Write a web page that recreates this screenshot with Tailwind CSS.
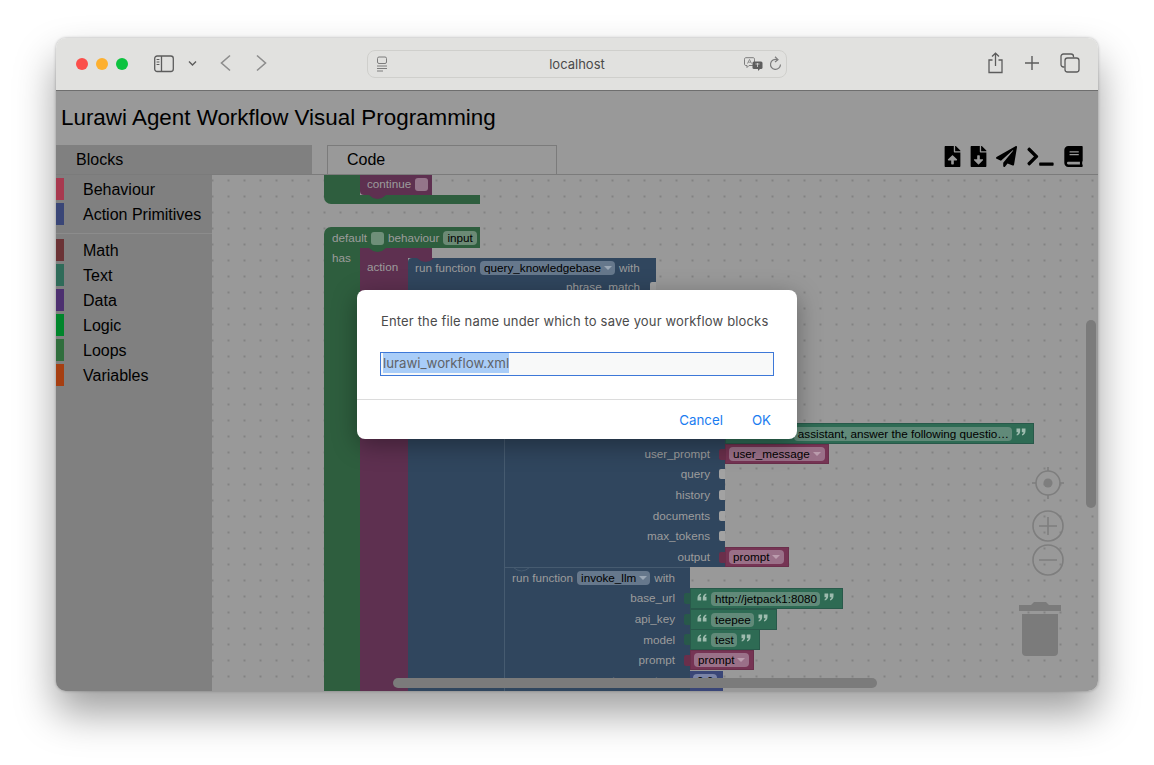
<!DOCTYPE html>
<html lang="en">
<head>
  <meta charset="UTF-8" />
  <title>Lurawi Agent Workflow Visual Programming</title>
  <script src="https://cdn.jsdelivr.net/npm/@tailwindcss/browser@4"></script>
</head>
<body class="bg-white h-[765px] w-[1154px] overflow-hidden pt-[38px] pl-[56px] font-['Liberation_Sans',Arial,sans-serif] text-black">
  <svg class="hidden">
    <symbol id="quote-open" viewBox="0 0 10 8"><path d="M0.5 7.5V5C0.5 2.5 2 0.8 4 0.5V2C3 2.3 2.6 3 2.6 3.8H4.2V7.5ZM5.8 7.5V5C5.8 2.5 7.3 0.8 9.3 0.5V2C8.3 2.3 7.9 3 7.9 3.8H9.5V7.5Z" fill="currentColor"/></symbol>
    <symbol id="quote-close" viewBox="0 0 10 8"><path d="M9.5 0.5V3C9.5 5.5 8 7.2 6 7.5V6C7 5.7 7.4 5 7.4 4.2H5.8V0.5ZM4.2 0.5V3C4.2 5.5 2.7 7.2 0.7 7.5V6C1.7 5.7 2.1 5 2.1 4.2H0.5V0.5Z" fill="currentColor"/></symbol>
    <symbol id="caret" viewBox="0 0 8 4"><path d="M0 0H8L4 4Z" fill="currentColor"/></symbol>
  </svg>

  <!-- Browser window -->
  <div class="relative w-[1042px] h-[653px] rounded-[10px] overflow-hidden flex flex-col shadow-[0_22px_40px_rgba(0,0,0,0.38),0_0_3px_rgba(0,0,0,0.3)]">
    <!-- Safari toolbar -->
    <header class="relative h-[53px] shrink-0 bg-[#e1e1df] border-b border-[#6e6e6e] text-[#5c5c5c]">
      <div class="absolute left-[20px] top-[20px] flex gap-[8px]">
        <span class="w-[12px] h-[12px] rounded-full bg-[#fb4f4b]"></span>
        <span class="w-[12px] h-[12px] rounded-full bg-[#fdb02f]"></span>
        <span class="w-[12px] h-[12px] rounded-full bg-[#0cc23f]"></span>
      </div>
      <svg class="absolute left-[98px] top-[17px]" width="20" height="18" viewBox="0 0 20 18" fill="none" stroke="currentColor" stroke-width="1.3"><rect x="0.7" y="1" width="18.6" height="15.5" rx="2.5"/><path d="M7.5 1V16.5"/><path d="M2.6 4.5H5.4M2.6 7H5.4M2.6 9.5H5.4" stroke-width="1"/></svg>
      <svg class="absolute left-[132px] top-[22px]" width="9" height="7" viewBox="0 0 9 7" fill="none" stroke="currentColor" stroke-width="1.4"><path d="M1 1.5L4.5 5L8 1.5"/></svg>
      <svg class="absolute left-[163px] top-[16px] text-[#8d8d8d]" width="13" height="18" viewBox="0 0 13 18" fill="none" stroke="currentColor" stroke-width="1.6"><path d="M11 1.5L2.5 9L11 16.5"/></svg>
      <svg class="absolute left-[199px] top-[16px] text-[#8d8d8d]" width="13" height="18" viewBox="0 0 13 18" fill="none" stroke="currentColor" stroke-width="1.6"><path d="M2 1.5L10.5 9L2 16.5"/></svg>

      <!-- Address bar -->
      <div class="absolute left-[311px] top-[12px] w-[420px] h-[28px] rounded-[8px] border border-[#cfcfcc] flex items-center justify-center pt-[2px] text-[13px] text-[#4a4a4a] font-['Inter',sans-serif]">
        localhost
        <svg class="absolute left-[8px] top-[5px] text-[#7d7d7d]" width="13" height="16" viewBox="0 0 13 16" fill="none" stroke="currentColor" stroke-width="1"><rect x="1.5" y="1" width="9" height="6.5" rx="1.5"/><path d="M1 10H11M1 12.5H11M1 15H7"/></svg>
        <svg class="absolute left-[376px] top-[6px] text-[#7d7d7d]" width="19" height="14" viewBox="0 0 19 14"><path d="M2 0.7H9C10 0.7 10.5 1.2 10.5 2.2V7C10.5 8 10 8.5 9 8.5H5L3 10.5V8.5H2C1 8.5 0.5 8 0.5 7V2.2C0.5 1.2 1 0.7 2 0.7Z" fill="none" stroke="currentColor"/><path d="M3.4 6.6L5.5 2.4L7.6 6.6M4.2 5.2H6.8" fill="none" stroke="currentColor" stroke-width="0.8"/><rect x="8.5" y="4.5" width="10" height="7.5" rx="1.5" fill="#5e5e5e"/><path d="M14 12V14L16 12Z" fill="#5e5e5e"/><path d="M11.5 7H15.5M13.5 6V10" stroke="#d8d8d8" stroke-width="0.8"/></svg>
        <svg class="absolute left-[401px] top-[5px] text-[#7d7d7d]" width="13" height="16" viewBox="0 0 13 16" fill="none" stroke="currentColor" stroke-width="1.2"><path d="M8 3.6A5 5 0 1 0 11.5 8.5"/><path d="M6 0.8L9 3.6L6 6"/></svg>
      </div>

      <svg class="absolute left-[931px] top-[14px]" width="17" height="22" viewBox="0 0 17 22" fill="none" stroke="currentColor" stroke-width="1.3"><path d="M5.5 8H2V20.5H15V8H11.5"/><path d="M8.5 14V1.5M5 4.5L8.5 1.2L12 4.5"/></svg>
      <svg class="absolute left-[969px] top-[18px]" width="14" height="14" viewBox="0 0 14 14" fill="none" stroke="currentColor" stroke-width="1.4"><path d="M7 0V14M0 7H14"/></svg>
      <svg class="absolute left-[1004px] top-[15px]" width="20" height="20" viewBox="0 0 20 20" fill="none" stroke="currentColor" stroke-width="1.3"><path d="M4.5 14H3.5C2 14 1 13 1 11.5V3.5C1 2 2 1 3.5 1H11C12.5 1 13.5 2 13.5 3.5V4.5"/><rect x="5" y="5" width="14" height="14" rx="2.5"/></svg>
    </header>

    <!-- Page, dimmed by the open prompt -->
    <div class="flex-1 min-h-0 flex flex-col bg-[#999999]">
      <h1 class="h-[54px] shrink-0 pl-[5px] flex items-center text-[22.4px] font-normal">Lurawi Agent Workflow Visual Programming</h1>

      <div class="h-[30px] shrink-0 flex border-b border-[#7b7b7b]">
        <div class="w-[256px] bg-[#808080] pl-[20px] pt-[6px] text-[16px] leading-[18px]">Blocks</div>
        <div class="ml-[15px] w-[230px] border border-b-0 border-[#7b7b7b] pl-[19px] pt-[5px] text-[16px] leading-[18px]">Code</div>
        <div class="absolute left-[888px] top-[108px] flex items-center gap-[9px]">
          <svg width="17" height="21" viewBox="0 0 384 512"><path d="M224 136V0H24C10.7 0 0 10.7 0 24v464c0 13.3 10.7 24 24 24h336c13.3 0 24-10.7 24-24V160H248c-13.2 0-24-10.8-24-24zm65.18 216.01H224v80c0 8.84-7.16 16-16 16h-32c-8.84 0-16-7.16-16-16v-80H94.82c-14.28 0-21.41-17.29-11.27-27.36l96.42-95.7c6.65-6.61 17.39-6.61 24.04 0l96.42 95.7c10.15 10.07 3.03 27.36-11.25 27.36zM377 105L279.1 7c-4.5-4.5-10.6-7-17-7H256v128h128v-6.1c0-6.3-2.5-12.4-7-16.9z"/></svg>
          <svg width="17" height="21" viewBox="0 0 384 512"><path d="M224 136V0H24C10.7 0 0 10.7 0 24v464c0 13.3 10.7 24 24 24h336c13.3 0 24-10.7 24-24V160H248c-13.2 0-24-10.8-24-24zm76.45 211.36l-96.42 95.7c-6.65 6.61-17.39 6.61-24.04 0l-96.42-95.7C73.42 337.29 80.54 320 94.82 320H160v-80c0-8.84 7.16-16 16-16h32c8.84 0 16 7.16 16 16v80h65.18c14.28 0 21.4 17.29 11.27 27.36zM377 105L279.1 7c-4.5-4.5-10.6-7-17-7H256v128h128v-6.1c0-6.3-2.5-12.4-7-16.9z"/></svg>
          <svg width="21" height="21" viewBox="0 0 512 512"><path d="M476 3.2L12.5 270.6c-18.1 10.4-15.8 35.6 2.2 43.2L121 358.4l287.3-253.2c5.5-4.9 13.3 2.6 8.6 8.3L176 407v80.5c0 23.6 28.5 32.9 42.5 15.8L282 426l124.6 52.2c14.2 6 30.4-2.9 33-18.2l72-432C515 7.8 493.3-6.8 476 3.2z"/></svg>
          <svg class="ml-px" width="27" height="21" viewBox="0 0 640 512"><path d="M257.981 272.971L63.638 467.314c-9.373 9.373-24.569 9.373-33.941 0L7.029 444.647c-9.357-9.357-9.375-24.522-.04-33.901L161.011 256 6.99 101.255c-9.335-9.379-9.317-24.544.04-33.901l22.667-22.667c9.373-9.373 24.569-9.373 33.941 0L257.981 239.03c9.373 9.372 9.373 24.568 0 33.941zM640 456v-32c0-13.255-10.745-24-24-24H312c-13.255 0-24 10.745-24 24v32c0 13.255 10.745 24 24 24h304c13.255 0 24-10.745 24-24z"/></svg>
          <svg class="ml-px" width="19" height="21" viewBox="0 0 448 512"><path d="M448 360V24c0-13.3-10.7-24-24-24H96C43 0 0 43 0 96v320c0 53 43 96 96 96h328c13.3 0 24-10.7 24-24v-16c0-7.5-3.5-14.3-8.9-18.7-4.2-15.4-4.2-59.3 0-74.7 5.4-4.3 8.9-11.1 8.9-18.6zM128 134c0-3.3 2.7-6 6-6h212c3.3 0 6 2.7 6 6v20c0 3.3-2.7 6-6 6H134c-3.3 0-6-2.7-6-6v-20zm0 64c0-3.3 2.7-6 6-6h212c3.3 0 6 2.7 6 6v20c0 3.3-2.7 6-6 6H134c-3.3 0-6-2.7-6-6v-20zm253.4 250H96c-17.7 0-32-14.3-32-32 0-17.6 14.4-32 32-32h285.4c-1.9 17.1-1.9 46.9 0 64z"/></svg>
        </div>
      </div>

      <div class="flex-1 min-h-0 flex">
        <!-- Toolbox -->
        <aside class="w-[156px] shrink-0 bg-[#808080] pt-[3px] text-[16px]">
          <div class="h-[25px] flex items-start"><span class="w-[8px] h-[22px] bg-[#a8394f]"></span><span class="ml-[19px] leading-[24px]">Behaviour</span></div>
          <div class="h-[25px] flex items-start"><span class="w-[8px] h-[22px] bg-[#3a4677]"></span><span class="ml-[19px] leading-[24px]">Action Primitives</span></div>
          <div class="h-px mt-[5px] mb-[5px] bg-[#8c8c8c]"></div>
          <div class="h-[25px] flex items-start"><span class="w-[8px] h-[22px] bg-[#6b3336]"></span><span class="ml-[19px] leading-[24px]">Math</span></div>
          <div class="h-[25px] flex items-start"><span class="w-[8px] h-[22px] bg-[#2f6b59]"></span><span class="ml-[19px] leading-[24px]">Text</span></div>
          <div class="h-[25px] flex items-start"><span class="w-[8px] h-[22px] bg-[#4d3070]"></span><span class="ml-[19px] leading-[24px]">Data</span></div>
          <div class="h-[25px] flex items-start"><span class="w-[8px] h-[22px] bg-[#00852b]"></span><span class="ml-[19px] leading-[24px]">Logic</span></div>
          <div class="h-[25px] flex items-start"><span class="w-[8px] h-[22px] bg-[#306e3d]"></span><span class="ml-[19px] leading-[24px]">Loops</span></div>
          <div class="h-[25px] flex items-start"><span class="w-[8px] h-[22px] bg-[#a63f12]"></span><span class="ml-[19px] leading-[24px]">Variables</span></div>
        </aside>

        <!-- Blockly workspace: blocks sit on a free canvas -->
        <main class="relative flex-1 overflow-hidden bg-[radial-gradient(circle,#686868_0.6px,transparent_0.8px)] bg-[size:16px_16px] bg-[position:8.5px_-2.5px] text-[11.7px] leading-[14px] text-[#9c9c9c]">
          <!-- continue block -->
          <div class="absolute left-[112px] top-0 w-[36px] h-[21px] bg-[#2e5e3e]"></div>
          <div class="absolute left-[112px] top-[20px] w-[156px] h-[9px] bg-[#2e5e3e] rounded-bl-[7px]"></div>
          <div class="absolute left-[148px] top-0 w-[72px] h-[20px] bg-[#5e3050] rounded-bl-[4px] pl-[7px] pt-[2px] flex items-start">
            continue
            <span class="ml-[4px] mt-[1px] w-[13px] h-[13px] rounded-[3px] bg-[#94758a]"></span>
          </div>
          <svg class="absolute left-[157px] top-[20px]" width="17" height="4" viewBox="0 0 17 4"><path d="M0 0H17L13 3L8.5 4L4 3Z" fill="#5e3050"/></svg>

          <!-- default behaviour -->
          <div class="absolute left-[112px] top-[52px] w-[156px] h-[21px] bg-[#2e5e3e] rounded-tl-[7px] pl-[8px] pt-[4px] flex items-start">
            default
            <span class="ml-[4px] mt-[1px] w-[13px] h-[13px] rounded-[3px] bg-[#6f8f79]"></span>
            <span class="ml-[4px]">behaviour</span>
            <span class="ml-[4px] px-[4px] h-[14px] rounded-[4px] bg-[#6b8a75] text-black">input</span>
          </div>
          <div class="absolute left-[112px] top-[73px] w-[36px] h-[450px] bg-[#2e5e3e] pl-[8px] pt-[3px]">has</div>

          <!-- action -->
          <div class="absolute left-[148px] top-[73px] w-[72px] h-[10px] bg-[#5e3050]"></div>
          <div class="absolute left-[148px] top-[73px] w-[48px] h-[450px] bg-[#5e3050] pl-[7px] pt-[12px]">action</div>
          <svg class="absolute left-[157px] top-[73px]" width="17" height="4" viewBox="0 0 17 4"><path d="M0 0H17L13 3L8.5 4L4 3Z" fill="#2e5e3e"/></svg>

          <!-- run function bodies -->
          <div class="absolute left-[196px] top-[83px] w-[248px] h-[60px] bg-[#30465e] rounded-tl-[4px]">
            <div class="pl-[7px] pt-[3px] flex items-start">
              run function
              <span class="ml-[4px] pl-[4px] pr-[3px] h-[14px] rounded-[4px] bg-[#66788c] text-black flex items-center gap-[3px]">query_knowledgebase<svg class="text-[#9aa7b5]" width="8" height="4"><use href="#caret"/></svg></span>
              <span class="ml-[4px]">with</span>
            </div>
            <div class="absolute right-[16px] top-[22px]">phrase_match</div>
            <span class="absolute right-0 top-[24px] w-[6px] h-[10px] rounded-l-[2px] bg-[#a2a2a2]"></span>
          </div>
          <svg class="absolute left-[205px] top-[83px]" width="17" height="4" viewBox="0 0 17 4"><path d="M0 0H17L13 3L8.5 4L4 3Z" fill="#5e3050"/></svg>
          <div class="absolute left-[196px] top-[143px] w-[317px] h-[249px] bg-[#30465e]"></div>
          <div class="absolute left-[196px] top-[392px] w-[282px] h-[131px] bg-[#30465e]"></div>
          <div class="absolute left-[292px] top-[240px] w-px h-[283px] bg-[#465b70]"></div>
          <div class="absolute left-[292px] top-[392px] w-[186px] h-px bg-[#465b70]"></div>
          <svg class="absolute left-[301px] top-[392px]" width="17" height="5" viewBox="0 0 17 5"><path d="M0 0L4 3L8.5 4L13 3L17 0" fill="none" stroke="#465b70"/></svg>

          <!-- first function inputs -->
          <div class="absolute left-[292px] top-[272px] w-[206px] text-right">user_prompt</div>
          <div class="absolute left-[292px] top-[292px] w-[206px] text-right">query</div>
          <div class="absolute left-[292px] top-[313px] w-[206px] text-right">history</div>
          <div class="absolute left-[292px] top-[334px] w-[206px] text-right">documents</div>
          <div class="absolute left-[292px] top-[354px] w-[206px] text-right">max_tokens</div>
          <div class="absolute left-[292px] top-[375px] w-[206px] text-right">output</div>
          <span class="absolute left-[507px] top-[294px] w-[6px] h-[10px] rounded-l-[2px] bg-[#a2a2a2]"></span>
          <span class="absolute left-[507px] top-[315px] w-[6px] h-[10px] rounded-l-[2px] bg-[#a2a2a2]"></span>
          <span class="absolute left-[507px] top-[336px] w-[6px] h-[10px] rounded-l-[2px] bg-[#a2a2a2]"></span>
          <span class="absolute left-[507px] top-[356px] w-[6px] h-[10px] rounded-l-[2px] bg-[#a2a2a2]"></span>

          <!-- system prompt string -->
          <div class="absolute left-[513px] top-[248px] w-[309px] h-[21px] bg-[#2e6b54] border border-[#28594a] flex items-center justify-end pr-[7px] gap-[4px]">
            <span class="pl-[4px] pr-[3px] h-[14px] rounded-[4px] bg-[#618a79] text-black whitespace-nowrap">assistant, answer the following questio…</span>
            <svg class="text-[#9dbbae] -translate-y-[2px]" width="10" height="8"><use href="#quote-close"/></svg>
          </div>

          <!-- variables on first function -->
          <div class="absolute left-[513px] top-[269px] w-[104px] h-[20px] bg-[#763454] border border-[#6a2f4b] flex items-center pl-[3px]">
            <span class="absolute left-[-7px] top-[4px] w-[6px] h-[11px] rounded-l-[2px] bg-[#6a2f4b]"></span>
            <span class="pl-[4px] pr-[4px] h-[14px] rounded-[4px] bg-[#9a7088] text-black flex items-center gap-[3px]">user_message<svg class="text-[#bb9cad]" width="8" height="4"><use href="#caret"/></svg></span>
          </div>
          <div class="absolute left-[513px] top-[372px] w-[64px] h-[20px] bg-[#763454] border border-[#6a2f4b] flex items-center pl-[3px]">
            <span class="absolute left-[-7px] top-[4px] w-[6px] h-[11px] rounded-l-[2px] bg-[#6a2f4b]"></span>
            <span class="pl-[4px] pr-[4px] h-[14px] rounded-[4px] bg-[#9a7088] text-black flex items-center gap-[3px]">prompt<svg class="text-[#bb9cad]" width="8" height="4"><use href="#caret"/></svg></span>
          </div>

          <!-- invoke_llm -->
          <div class="absolute left-[300px] top-[396px] flex items-start">
            run function
            <span class="ml-[4px] pl-[4px] pr-[3px] h-[14px] rounded-[4px] bg-[#66788c] text-black flex items-center gap-[3px]">invoke_llm<svg class="text-[#9aa7b5]" width="8" height="4"><use href="#caret"/></svg></span>
            <span class="ml-[4px]">with</span>
          </div>
          <div class="absolute left-[292px] top-[416px] w-[171px] text-right">base_url</div>
          <div class="absolute left-[292px] top-[437px] w-[171px] text-right">api_key</div>
          <div class="absolute left-[292px] top-[458px] w-[171px] text-right">model</div>
          <div class="absolute left-[292px] top-[478px] w-[171px] text-right">prompt</div>
          <div class="absolute left-[292px] top-[499px] w-[171px] text-right">temperature</div>

          <!-- invoke_llm values -->
          <div class="absolute left-[478px] top-[413px] w-[153px] h-[21px] bg-[#2e6b54] border border-[#28594a] flex items-center pl-[6px] gap-[4px]">
            <span class="absolute left-[-7px] top-[4px] w-[6px] h-[11px] rounded-l-[2px] bg-[#28594a]"></span>
            <svg class="text-[#9dbbae] -translate-y-[2px]" width="10" height="8"><use href="#quote-open"/></svg>
            <span class="pl-[4px] pr-[3px] h-[14px] rounded-[4px] bg-[#618a79] text-black">http://jetpack1:8080</span>
            <svg class="text-[#9dbbae] -translate-y-[2px]" width="10" height="8"><use href="#quote-close"/></svg>
          </div>
          <div class="absolute left-[478px] top-[434px] w-[87px] h-[21px] bg-[#2e6b54] border border-[#28594a] flex items-center pl-[6px] gap-[4px]">
            <span class="absolute left-[-7px] top-[4px] w-[6px] h-[11px] rounded-l-[2px] bg-[#28594a]"></span>
            <svg class="text-[#9dbbae] -translate-y-[2px]" width="10" height="8"><use href="#quote-open"/></svg>
            <span class="pl-[4px] pr-[3px] h-[14px] rounded-[4px] bg-[#618a79] text-black">teepee</span>
            <svg class="text-[#9dbbae] -translate-y-[2px]" width="10" height="8"><use href="#quote-close"/></svg>
          </div>
          <div class="absolute left-[478px] top-[454px] w-[70px] h-[21px] bg-[#2e6b54] border border-[#28594a] flex items-center pl-[6px] gap-[4px]">
            <span class="absolute left-[-7px] top-[4px] w-[6px] h-[11px] rounded-l-[2px] bg-[#28594a]"></span>
            <svg class="text-[#9dbbae] -translate-y-[2px]" width="10" height="8"><use href="#quote-open"/></svg>
            <span class="pl-[4px] pr-[3px] h-[14px] rounded-[4px] bg-[#618a79] text-black">test</span>
            <svg class="text-[#9dbbae] -translate-y-[2px]" width="10" height="8"><use href="#quote-close"/></svg>
          </div>
          <div class="absolute left-[478px] top-[475px] w-[64px] h-[20px] bg-[#763454] border border-[#6a2f4b] flex items-center pl-[3px]">
            <span class="absolute left-[-7px] top-[4px] w-[6px] h-[11px] rounded-l-[2px] bg-[#6a2f4b]"></span>
            <span class="px-[4px] h-[14px] rounded-[4px] bg-[#9a7088] text-black flex items-center gap-[3px]">prompt<svg class="text-[#bb9cad]" width="8" height="4"><use href="#caret"/></svg></span>
          </div>
          <div class="absolute left-[478px] top-[496px] w-[33px] h-[21px] bg-[#3a4677] flex items-start pl-[3px] pt-[3px]">
            <span class="px-[4px] h-[14px] rounded-[4px] bg-[#7a83a6] text-black">0.6</span>
          </div>

          <!-- Workspace controls -->
          <svg class="absolute left-[818px] top-[290px]" width="36" height="36" viewBox="0 0 36 36" fill="none" stroke="#7e7e7e" stroke-width="1.6"><circle cx="18" cy="18" r="12"/><circle cx="18" cy="18" r="4.5" fill="#7e7e7e" stroke="none"/><path d="M18 2V6M18 30V34M2 18H6M30 18H34"/></svg>
          <svg class="absolute left-[820px] top-[335px]" width="32" height="32" viewBox="0 0 32 32" fill="none" stroke="#7e7e7e" stroke-width="1.6"><circle cx="16" cy="16" r="15"/><path d="M16 7V25M7 16H25"/></svg>
          <svg class="absolute left-[820px] top-[369px]" width="32" height="32" viewBox="0 0 32 32" fill="none" stroke="#7e7e7e" stroke-width="1.6"><circle cx="16" cy="16" r="15"/><path d="M7 16H25"/></svg>
          <svg class="absolute left-[807px] top-[427px]" width="42" height="54" viewBox="0 0 42 54" fill="#7b7b7b"><path d="M12 3L15 0H27L30 3H42V9H0V3Z"/><path d="M3 12H39V50C39 52.5 37.5 54 35 54H7C4.5 54 3 52.5 3 50Z"/></svg>

          <!-- Scrollbars -->
          <div class="absolute left-[874px] top-[145px] w-[10px] h-[188px] rounded-full bg-[#7b7b7b]"></div>
          <div class="absolute left-[181px] top-[503px] w-[484px] h-[10px] rounded-full bg-[#7b7b7b]"></div>
        </main>
      </div>
    </div>

    <!-- Prompt dialog -->
    <div class="absolute left-[301px] top-[252px] w-[440px] h-[149px] rounded-[8px] bg-white shadow-[0_6px_24px_rgba(0,0,0,0.35)] font-['Inter',sans-serif]">
      <p class="pl-[24px] pt-[23px] text-[13px] leading-[16px] text-[#4b4b4b] tracking-[0.012em] whitespace-nowrap">Enter the file name under which to save your workflow blocks</p>
      <div class="ml-[23px] mt-[23px] w-[394px] h-[24px] border border-[#3d78d8] bg-[#f8f9f9] pl-[2px] pb-[2px] flex items-center text-[13.25px] text-[#5f6368]">
        <span class="bg-[#a9cdf8] leading-[20px]">lurawi_workflow.xml</span>
      </div>
      <div class="mt-[23px] h-px bg-[#dcdcdc]"></div>
      <div class="flex justify-end gap-[29px] pr-[26px] pt-[12px] text-[13.3px] leading-[17px] text-[#1a7cf0]">
        <span>Cancel</span>
        <span>OK</span>
      </div>
    </div>
  </div>
</body>
</html>
